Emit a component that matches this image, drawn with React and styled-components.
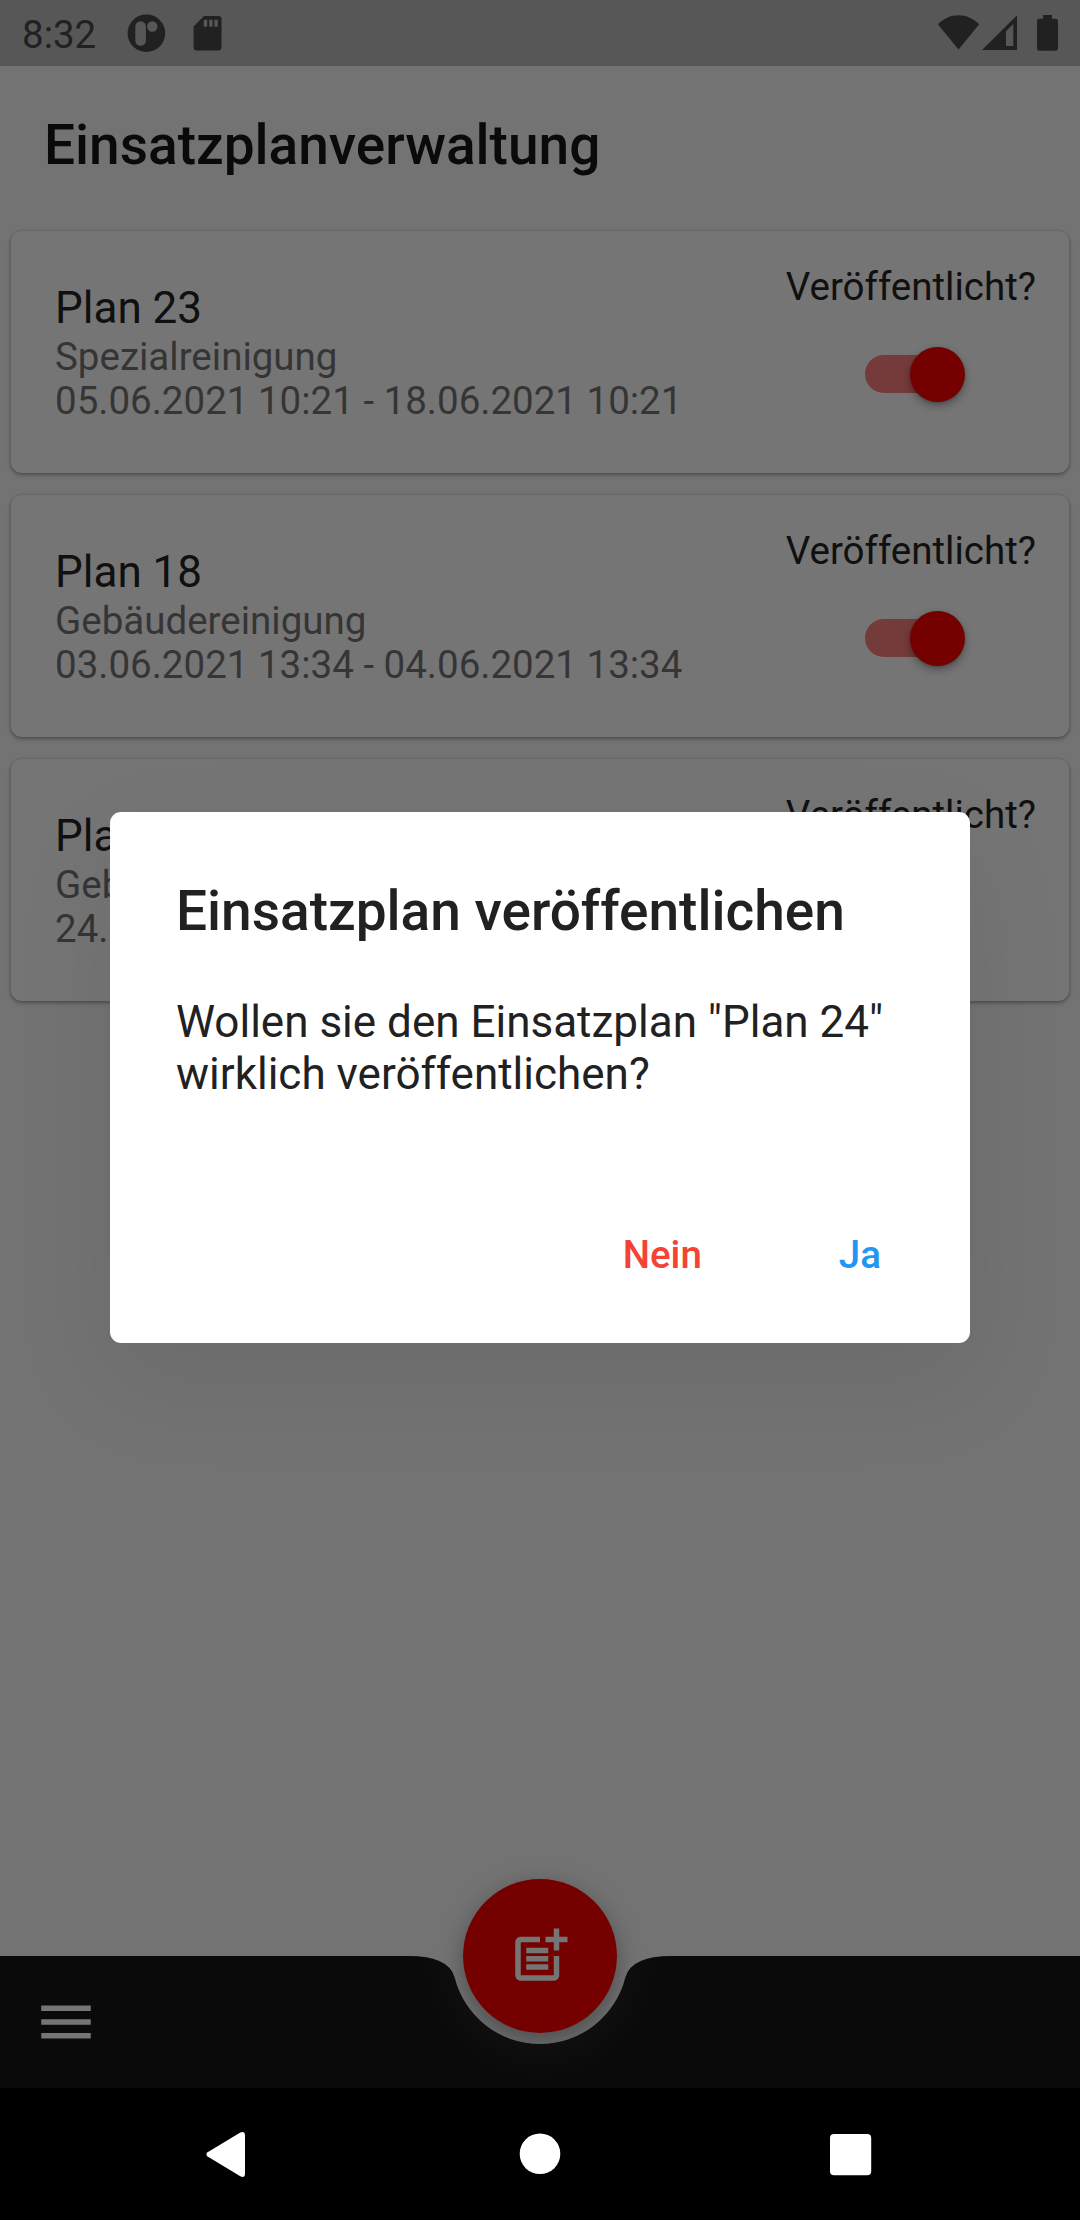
import React from "react";
import styled, { createGlobalStyle } from "styled-components";

const GlobalStyle = createGlobalStyle`
  *, *::before, *::after { box-sizing: border-box; }
  body { margin: 0; font-family: Roboto, "Liberation Sans", sans-serif; }
  h1, h2, p { margin: 0; }
  button { font: inherit; border: 0; padding: 0; background: none; }
  svg { display: block; }
`;

const Screen = styled.div`
  position: relative;
  width: 1080px;
  height: 2220px;
  overflow: hidden;
  display: flex;
  flex-direction: column;
  background: #737373;
`;

const StatusBar = styled.header`
  flex: none;
  height: 66px;
  padding: 0 20px 0 22px;
  display: flex;
  align-items: flex-start;
  background: #575757;
  color: #212121;
  fill: #212121;
`;

const Clock = styled.span`
  width: 102px;
  padding-top: 12px;
  font-size: 38.5px;
  line-height: 46px;
`;

const StatusSpacer = styled.span`
  flex: 1;
`;

const AppBar = styled.div`
  flex: none;
  height: 154px;
  padding: 4px 44px 0;
  display: flex;
  align-items: center;
`;

const Title = styled.h1`
  font-size: 55px;
  font-weight: 500;
  line-height: 64px;
  color: #0a0a0a;
`;

const PlanList = styled.main`
  flex: 1;
  padding: 11px;
  display: flex;
  flex-direction: column;
  gap: 22px;
`;

const Card = styled.article`
  flex: none;
  height: 242px;
  padding: 0 33px 0 44px;
  display: flex;
  justify-content: space-between;
  border-radius: 11px;
  background: #757575;
  box-shadow: 0 2px 4px rgba(0, 0, 0, 0.32), 0 0 3px rgba(0, 0, 0, 0.12);
`;

const PlanInfo = styled.div`
  padding-top: 51px;
`;

const PlanName = styled.h2`
  margin-bottom: 1px;
  font-size: 44px;
  font-weight: 400;
  line-height: 52px;
  color: #101010;
`;

const PlanDetail = styled.p`
  font-size: 38.5px;
  line-height: 44px;
  color: #353535;
`;

const Publish = styled.div`
  padding-top: 33px;
  display: flex;
  flex-direction: column;
  align-items: center;
  gap: 44.75px;
`;

const PublishLabel = styled.span`
  font-size: 38.5px;
  line-height: 46px;
  color: #101010;
`;

const Track = styled.span`
  width: 91px;
  height: 38.5px;
  display: flex;
  align-items: center;
  justify-content: ${(p) => (p.$on ? "flex-end" : "flex-start")};
  border-radius: 20px;
  background: ${(p) => (p.$on ? "#753b3b" : "#4f4f4f")};
`;

const Thumb = styled.span`
  flex: none;
  width: 55px;
  height: 55px;
  margin: 0 -8.5px;
  border-radius: 50%;
  background: ${(p) => (p.$on ? "#750000" : "#737373")};
  box-shadow: 0 4px 8px rgba(0, 0, 0, 0.3), 0 1px 3px rgba(0, 0, 0, 0.2);
`;

const BottomBar = styled.footer`
  position: relative;
  flex: none;
  height: 132px;
  padding-left: 33px;
  display: flex;
  align-items: center;
`;

const FabShadow = styled.span`
  position: absolute;
  left: 463px;
  top: -77px;
  width: 154px;
  height: 154px;
  border-radius: 50%;
  box-shadow: 0 10px 20px rgba(0, 0, 0, 0.24), 0 3px 30px rgba(0, 0, 0, 0.1);
`;

const BarShape = styled.svg`
  position: absolute;
  inset: 0;
`;

const MenuButton = styled.button`
  position: relative;
  fill: #757575;
`;

const Fab = styled.button`
  position: absolute;
  left: 463px;
  top: -77px;
  width: 154px;
  height: 154px;
  display: grid;
  place-items: center;
  border-radius: 50%;
  background: #750000;
  fill: #757575;
`;

const NavBar = styled.nav`
  flex: none;
  height: 132px;
  padding: 0 197px;
  display: flex;
  align-items: center;
  justify-content: space-between;
  background: #000;
  fill: #fff;
`;

const Dialog = styled.section`
  position: absolute;
  left: 110px;
  top: 811.5px;
  width: 860px;
  height: 531px;
  padding: 67px 66px 55px;
  display: flex;
  flex-direction: column;
  border-radius: 11px;
  background: #fff;
  color: #212121;
  box-shadow: 0 36px 110px rgba(0, 0, 0, 0.075);
`;

const DialogTitle = styled.h2`
  font-size: 55px;
  font-weight: 500;
  line-height: 64px;
`;

const DialogText = styled.p`
  margin-top: 53.5px;
  font-size: 44px;
  line-height: 52px;
`;

const Actions = styled.div`
  margin-top: auto;
  padding-right: 23px;
  display: flex;
  justify-content: flex-end;
  gap: 137px;
`;

const Action = styled.button`
  font-size: 38.5px;
  font-weight: 500;
  line-height: 66px;
  color: ${(p) => p.$color};
`;

const plans = [
  { name: "Plan 23", kind: "Spezialreinigung", period: "05.06.2021 10:21 - 18.06.2021 10:21", published: true },
  { name: "Plan 18", kind: "Gebäudereinigung", period: "03.06.2021 13:34 - 04.06.2021 13:34", published: true },
  { name: "Plan 24", kind: "Gebäudereinigung", period: "24.06.2021 10:21 - 25.06.2021 10:21", published: false },
];

function PlanCard({ plan }) {
  return (
    <Card>
      <PlanInfo>
        <PlanName>{plan.name}</PlanName>
        <PlanDetail>{plan.kind}</PlanDetail>
        <PlanDetail>{plan.period}</PlanDetail>
      </PlanInfo>
      <Publish>
        <PublishLabel>Veröffentlicht?</PublishLabel>
        <Track $on={plan.published}>
          <Thumb $on={plan.published} />
        </Track>
      </Publish>
    </Card>
  );
}

function NotificationIcons() {
  return (
    <svg width="110" height="66" viewBox="124 0 110 66">
      <circle cx="146.4" cy="33.2" r="18.8" />
      <rect x="135.3" y="21.3" width="10.6" height="24.4" rx="5.3" fill="#575757" />
      <circle cx="152.3" cy="26.5" r="5.2" fill="#575757" />
      <path d="M204 16H218.5Q221.5 16 221.5 19V47.5Q221.5 50.5 218.5 50.5H196.6Q193.6 50.5 193.6 47.5V26.5Z" />
      <path d="M203.8 19.8h3.4v7h-3.4zM209.2 19.8h3.4v7h-3.4zM214.4 19.8h3.4v7h-3.4z" fill="#575757" />
    </svg>
  );
}

function SystemIcons() {
  return (
    <svg width="130" height="66" viewBox="930 0 130 66">
      <path d="M958.5 49.5L937.8 24.3C943.5 18.5 950.5 15.2 958.5 15.2S973.5 18.5 979.2 24.3Z" />
      <path fillRule="evenodd" d="M982 50L1017 15.3V50ZM1006 46H1013.3V24L1006 31.3Z" />
      <path d="M1043.2 15H1052V18.8H1055.5Q1058 18.8 1058 21.3V48Q1058 50.7 1055.5 50.7H1039.5Q1037 50.7 1037 48V21.3Q1037 18.8 1039.5 18.8H1043.2Z" />
    </svg>
  );
}

export default function App() {
  return (
    <>
      <GlobalStyle />
      <Screen>
        <StatusBar>
          <Clock>8:32</Clock>
          <NotificationIcons />
          <StatusSpacer />
          <SystemIcons />
        </StatusBar>
        <AppBar>
          <Title>Einsatzplanverwaltung</Title>
        </AppBar>
        <PlanList>
          {plans.map((plan) => (
            <PlanCard key={plan.name} plan={plan} />
          ))}
        </PlanList>
        <BottomBar>
          <FabShadow />
          <BarShape width="1080" height="132" viewBox="0 0 1080 132">
            <defs>
              <radialGradient id="notchGlow" gradientUnits="userSpaceOnUse" cx="540" cy="8" r="116">
                <stop offset="0.68" stopColor="#0f0f10" />
                <stop offset="0.84" stopColor="#0c0c0d" />
                <stop offset="1" stopColor="#0a0a0a" />
              </radialGradient>
            </defs>
            <path
              fill="url(#notchGlow)"
              d="M0 0H408Q449.25 0 454.67 21.5A88 88 0 0 0 625.33 21.5Q630.75 0 672 0H1080V132H0Z"
            />
          </BarShape>
          <MenuButton aria-label="Menü">
            <svg width="66" height="66" viewBox="0 0 24 24">
              <path d="M3 18h18v-2H3v2zm0-5h18v-2H3v2zm0-7v2h18V6H3z" />
            </svg>
          </MenuButton>
          <Fab aria-label="Plan hinzufügen">
            <svg width="66" height="66" viewBox="0 0 24 24">
              <path d="M17 19H5V7h7V5H5c-1.1 0-2 .9-2 2v12c0 1.1.9 2 2 2h12c1.1 0 2-.9 2-2v-7h-2z" />
              <path d="M19 2h-2v3h-3v2h3v3h2V7h3V5h-3zM7 9h8v2H7zM7 12h8v2H7zM7 15h8v2H7z" />
            </svg>
          </Fab>
        </BottomBar>
        <NavBar>
          <svg width="58" height="66" viewBox="197 2121 58 66">
            <path d="M207.6 2152.2L240.3 2132.5Q245 2130.5 245 2135.5V2173.5Q245 2178.5 240.3 2176.2L207.6 2156.6Q205.2 2154.4 207.6 2152.2Z" />
          </svg>
          <svg width="58" height="66" viewBox="511 2121 58 66">
            <circle cx="540" cy="2153.8" r="20.3" />
          </svg>
          <svg width="58" height="66" viewBox="825 2121 58 66">
            <rect x="830" y="2134" width="41.2" height="41.2" rx="4" />
          </svg>
        </NavBar>
        <Dialog role="dialog">
          <DialogTitle>Einsatzplan veröffentlichen</DialogTitle>
          <DialogText>
            Wollen sie den Einsatzplan "Plan 24"
            <br />
            wirklich veröffentlichen?
          </DialogText>
          <Actions>
            <Action $color="#f44336">Nein</Action>
            <Action $color="#2196f3">Ja</Action>
          </Actions>
        </Dialog>
      </Screen>
    </>
  );
}
